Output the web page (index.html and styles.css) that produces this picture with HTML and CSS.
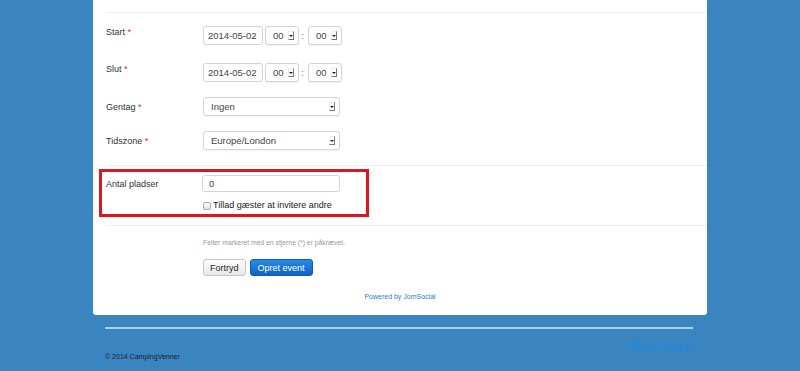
FILE: index.html
```html
<!DOCTYPE html>
<html lang="da">
<head>
    <meta charset="UTF-8">
    <meta name="viewport" content="width=device-width, initial-scale=1.0">
    <title>Opret event - CampingVenner</title>
    <link rel="stylesheet" href="styles.css">
</head>
<body>

<div class="page">
    <div class="panel">
        <div class="group group-time">
            <div class="row row-date row-spaced">
                <label class="row-label">Start <span class="req">*</span></label>
                <div class="controls">
                    <span class="field field-date">2014-05-02</span>
                    <span class="select select-time">00 <span class="arrow"></span></span>
                    <span class="colon">:</span>
                    <span class="select select-time">00 <span class="arrow"></span></span>
                </div>
            </div>
            <div class="row row-date">
                <label class="row-label">Slut <span class="req">*</span></label>
                <div class="controls">
                    <span class="field field-date">2014-05-02</span>
                    <span class="select select-time">00 <span class="arrow"></span></span>
                    <span class="colon">:</span>
                    <span class="select select-time">00 <span class="arrow"></span></span>
                </div>
            </div>
            <div class="row">
                <label class="row-label">Gentag <span class="req">*</span></label>
                <div class="controls">
                    <span class="select select-wide">Ingen <span class="arrow"></span></span>
                </div>
            </div>
            <div class="row">
                <label class="row-label">Tidszone <span class="req">*</span></label>
                <div class="controls">
                    <span class="select select-wide">Europe/London <span class="arrow"></span></span>
                </div>
            </div>
        </div>

        <div class="group group-seats">
            <!-- markeret felt -->
            <div class="highlight">
                <div class="row row-seats">
                    <label class="row-label">Antal pladser</label>
                    <div class="controls">
                        <span class="field field-wide">0</span>
                    </div>
                </div>
                <div class="row row-check">
                    <div class="controls">
                        <span class="checkbox"></span>
                        <span class="check-text">Tillad gæster at invitere andre</span>
                    </div>
                </div>
            </div>
        </div>

        <div class="group group-actions">
            <p class="note">Felter markeret med en stjerne (*) er påkrævet.</p>
            <div class="buttons">
                <button class="btn">Fortryd</button>
                <button class="btn btn-primary">Opret event</button>
            </div>
            <p class="powered"><a href="#">Powered by JomSocial</a></p>
        </div>
    </div>

    <div class="footer">
        <div class="footer-top"><a href="#">Tilbage til toppen</a></div>
        <p class="copyright">&copy; 2014 CampingVenner</p>
    </div>
</div>

</body>
</html>
```

FILE: styles.css
```css
body {
    margin: 0;
    background-color: #3a85c0;
    font-family: "Liberation Sans", Arial, sans-serif;
    font-size: 9px;
    color: #333;
}
.page {
    width: 614px;
    margin: 0 auto;
}
.panel {
    background-color: #fff;
    border-radius: 0 0 3px 3px;
    padding: 12px 0 14px 13px;
}
.group {
    border-top: 1px solid #eee;
}
.group-time {
    padding: 13px 0 0;
}
.row {
    display: flex;
    align-items: center;
    margin-bottom: 15px;
}
.row-spaced {
    margin-bottom: 18px;
}
.row-label {
    width: 97px;
    flex-shrink: 0;
}
.row-date .row-label {
    align-self: flex-start;
    padding-top: 1px;
}
.req {
    color: #d9262b;
}
.controls {
    display: flex;
    align-items: center;
}
.field, .select {
    box-sizing: border-box;
    height: 19px;
    line-height: 17px;
    border: 1px solid #d4d4d4;
    border-radius: 3px;
    padding: 0 4px;
    background-color: #fff;
    color: #444;
    font-size: 9.5px;
}
.field-date {
    width: 60px;
}
.select {
    display: flex;
    align-items: center;
    justify-content: space-between;
    box-shadow: 0 1px 1px rgba(0, 0, 0, 0.06);
}
.select-time {
    width: 34px;
    margin-left: 2px;
    padding: 0 4px 0 7px;
}
.select-wide {
    width: 137px;
    padding-left: 7px;
}
.arrow {
    position: relative;
    width: 6px;
    height: 9px;
    border-right: 1px solid #777;
    border-bottom: 1px solid #777;
    border-top: 1px solid #eee;
    border-left: 1px solid #eee;
    box-sizing: border-box;
}
.arrow::after {
    content: "";
    position: absolute;
    left: 0;
    top: 3px;
    border-left: 2px solid transparent;
    border-right: 2px solid transparent;
    border-top: 2px solid #222;
}
.colon {
    width: 7px;
    text-align: center;
    color: #666;
}
.group-seats {
    padding: 3px 0 8px;
}
.highlight {
    width: 260px;
    margin-left: -7px;
    border: 3px solid #e0151d;
    padding: 3px 0 4px 4px;
}
.row-seats {
    margin-bottom: 7px;
}
.row-seats .row-label {
    width: 96px;
}
.field-wide {
    width: 138px;
    height: 17px;
    line-height: 15px;
    padding-left: 6px;
}
.row-check {
    margin: 0 0 0 96px;
    height: 11px;
}
.checkbox {
    box-sizing: border-box;
    width: 8px;
    height: 8px;
    margin: 3px 2px 0 1px;
    border: 1px solid #aaa;
    border-radius: 2px;
    background: linear-gradient(#fff, #e4e4e4);
}
.check-text {
    color: #222;
}
.group-actions {
    padding: 12px 0 0 97px;
}
.note {
    margin: 0 0 12px;
    font-size: 6.8px;
    line-height: 9px;
    color: #999;
}
.buttons {
    display: flex;
    gap: 4px;
}
.btn {
    height: 17px;
    padding: 0 6px;
    border: 1px solid #c6c6c6;
    border-radius: 3px;
    background: linear-gradient(#fdfdfd, #e8e8e8);
    font-family: "Liberation Sans", Arial, sans-serif;
    font-size: 9px;
    color: #222;
}
.btn-primary {
    padding: 0 7px;
    border-color: #0b5fb4;
    background: linear-gradient(#2b8ae6, #0a63c6);
    color: #fff;
}
.powered {
    margin: 16px 0 0 -110px;
    text-align: center;
    font-size: 7px;
    line-height: 9px;
}
.powered a {
    color: #2b7fc4;
    text-decoration: none;
}
.footer {
    padding: 12px 14px 0 12px;
}
.footer-top {
    border-top: 2px solid #a6d3f4;
    padding-top: 12px;
    text-align: right;
    font-size: 8.5px;
    line-height: 10px;
}
.footer-top a {
    color: #1689e6;
    text-decoration: none;
}
.copyright {
    margin: 1px 0 0;
    font-size: 7px;
    line-height: 10px;
    color: #1a1f24;
}
```
